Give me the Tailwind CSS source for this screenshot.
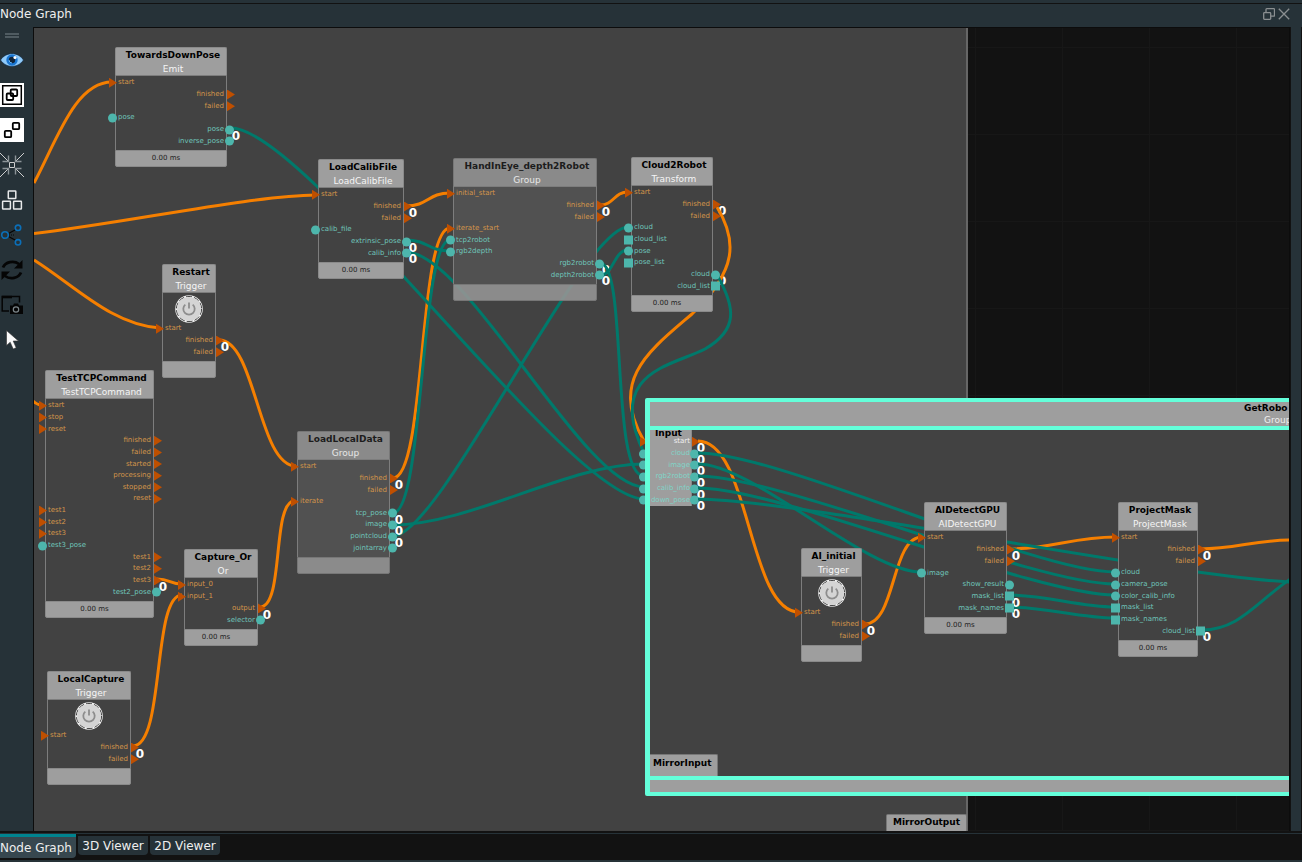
<!DOCTYPE html>
<html lang="en">
<head>
<meta charset="utf-8">
<title>Node Graph</title>
<script src="https://cdn.jsdelivr.net/npm/@tailwindcss/browser@4"></script>
</head>
<body class="flex h-screen flex-col overflow-hidden bg-[#263238] font-['DejaVu_Sans',sans-serif] text-[12px] text-[#eeeeee]">
<header class="mt-[3px] flex h-6 shrink-0 items-center justify-between border-t border-[#121212] pb-[3px] pr-3">
  <h1 class="leading-5">Node Graph</h1>
  <div class="flex gap-[3px]">
    <button aria-label="Float panel" class="h-3 w-3"><svg viewBox="0 0 12 12" class="h-3 w-3 fill-none stroke-[#8b8f91]"><rect x=".7" y="4.700" width="7" height="6.600" rx=".8" stroke-width="1.300"/><path stroke-width="1.300" d="M3 4.500V1.500q0-.8.8-.8h7q.7 0 .7.700v6q0 .8-.8.800H8"/></svg></button>
    <button aria-label="Close panel" class="h-3 w-3"><svg viewBox="0 0 12 12" class="h-3 w-3 fill-none stroke-[#8b8f91]"><path stroke-width="1.3" d="M.8.8l10.4 10.4M11.2.8L.8 11.2"/></svg></button>
  </div>
</header>
<div class="flex min-h-0 flex-1">
  <nav aria-label="Graph tools" class="flex w-[33px] shrink-0 flex-col gap-[11px]">
    <div class="ml-[5px] mt-[6px] -mb-px h-[5px] w-[14px] border-y-2 border-[#4f5b61]"></div>
    <button aria-label="Show" class="h-6 w-6"><svg viewBox="0 0 24 24" class="h-6 w-6"><path d="M.5 12C6 3.500 18 3.500 23.500 12 18 20.500 6 20.500.5 12z" fill="#90caf9" stroke="#0d2a45" stroke-width=".7"/><circle cx="12" cy="12" r="5.700" fill="#1976d2"/><circle cx="12" cy="12" r="3.200" fill="#10243a"/><path d="M9 12a3 3 0 0 0 3 3" stroke="#64b5f6" fill="none"/><circle cx="15" cy="9.500" r="1.600" fill="#fff"/></svg></button>
    <button aria-label="Group nodes" class="h-6 w-6 bg-white"><svg viewBox="0 0 24 24" class="h-6 w-6 fill-none stroke-black"><path stroke-width="1.500" d="M2.700 2.700h18.600v18.600H2.700z"/><rect x="6.700" y="10.500" width="6.500" height="6.500" rx="1" stroke-width="1.800"/><rect x="10.700" y="6.500" width="6.500" height="6.500" rx="1" stroke-width="1.800"/></svg></button>
    <button aria-label="Ungroup nodes" class="h-6 w-6 bg-white"><svg viewBox="0 0 24 24" class="h-6 w-6 fill-none stroke-black"><rect x="4.800" y="12.800" width="6.400" height="6.400" rx="1" stroke-width="1.800"/><rect x="12.800" y="4.800" width="6.400" height="6.400" rx="1" stroke-width="1.800"/></svg></button>
    <button aria-label="Fit to view" class="h-6 w-6"><svg viewBox="0 0 24 24" class="h-6 w-6 fill-none stroke-[#e0e0e0]"><path stroke-width=".9" d="M0 0l8 8M24 0l-8 8M0 24l8-8M24 24l-8-8M9.500 9.500h5v5h-5z"/><path stroke="#8c9498" stroke-width="1.400" d="M2.500 8.500h6v-6M21.500 8.500h-6v-6M2.500 15.500h6v6M21.500 15.500h-6v6"/></svg></button>
    <button aria-label="Layout" class="h-6 w-6"><svg viewBox="0 0 24 24" class="h-6 w-6 fill-none stroke-[#e8eaeb]" stroke-width="1.500"><rect x="8.300" y="3" width="7.500" height="7.500" rx=".5"/><rect x="2.600" y="13.300" width="7.800" height="7.800" rx=".5"/><rect x="13.600" y="13.300" width="7.800" height="7.800" rx=".5"/></svg></button>
    <button aria-label="Connections" class="h-6 w-6"><svg viewBox="0 0 24 24" class="h-6 w-6 fill-none"><path d="M8.500 10.500L15.500 6.800M8.500 13.500l7 3.700" stroke="#050505" stroke-width="1.300"/><path d="M9 12h5" stroke="#050505" stroke-dasharray="1 1"/><g stroke="#0b6fb8" stroke-width="1.600"><circle cx="5" cy="12" r="3.300"/><circle cx="18" cy="4.800" r="2.700"/><circle cx="18" cy="19.300" r="2.700"/></g></svg></button>
    <button aria-label="Refresh" class="h-6 w-6"><svg viewBox="0 0 24 24" class="h-6 w-6"><path d="M3 9.500a10 8.500 0 0 1 16-3.500M21 14.500a10 8.500 0 0 1-16 3.500" fill="none" stroke="#050505" stroke-width="2.800"/><path d="M22.500 2v8.500H14zM1.500 22v-8.500H10z" fill="#050505"/></svg></button>
    <button aria-label="Save screenshot" class="h-6 w-6"><svg viewBox="0 0 24 24" class="h-6 w-6"><path d="M9 18H2.200V3.500h17.300v6" fill="none" stroke="#050505" stroke-width="1.500"/><path d="M2 2.800h10v2.500H2z" fill="#050505"/><path d="M10 12.500h3l1-2h4l1 2h4V21H10z" fill="#050505"/><circle cx="16" cy="16.500" r="2.700" fill="none" stroke="#7b8589" stroke-width="1.200"/></svg></button>
    <button aria-label="Select" class="h-6 w-6"><svg viewBox="0 0 24 24" class="h-6 w-6"><path d="M6.500 2.500v15l3.700-3.300 3 6.800 3-1.300-3-6.700h5.300z" fill="#fafafa" stroke="#303030" stroke-width=".6"/></svg></button>
  </nav>
  <main id="canvas" class="relative flex-1 overflow-hidden border-x border-t border-[#0c0c0c] bg-[#121212] bg-[linear-gradient(to_right,#171717_1px,transparent_1px),linear-gradient(to_bottom,#171717_1px,transparent_1px)] bg-[size:87px_87px] bg-[position:71px_19px]">
    <div class="absolute inset-y-0 left-0 w-[934px] border-r-2 border-[#666666] bg-[#424242]"></div>
    <div id="under"></div>
    <svg class="absolute inset-0 h-full w-full"><g id="outer-wires" transform="translate(-34 -28)" fill="none" stroke-width="3"></g></svg>
    <div id="outer-nodes"></div>
    <div class="absolute bottom-0 left-[852px] flex h-[17px] w-[81px] items-center justify-center rounded-t-xs border border-b-0 border-[#777777] bg-[#9e9e9e] text-[9px] font-bold text-black">MirrorOutput</div>
    <div class="absolute left-[615px] right-0 top-[374px] h-[390px] bg-[#424242]"></div>
    <div id="input-node"></div>
    <section class="absolute left-[611px] right-0 top-[370px] flex h-[398px] flex-col rounded-l-xs border-l-5 border-[#64ffda]">
      <div class="flex h-8 shrink-0 justify-end overflow-hidden border-y-4 border-[#64ffda] bg-[#9e9e9e]">
        <div class="w-[45px] text-[9px] leading-[13px]"><div class="font-bold text-black">GetRobo</div><div class="-mt-px pl-5">Group</div></div>
      </div>
      <div class="flex flex-1 items-end"><div class="h-[22px] rounded-tr-xs border-r border-t border-[#777777] bg-[#9e9e9e] pl-[3px] pr-[6px] text-[9px] font-bold leading-[17px] text-black">MirrorInput</div></div>
      <div class="h-5 shrink-0 border-y-4 border-[#64ffda] bg-[#9e9e9e]"></div>
    </section>
    <svg class="absolute inset-0 h-full w-full"><g id="inner-wires" transform="translate(-34 -28)" fill="none" stroke-width="3"></g></svg>
    <div id="inner-nodes"></div>
  </main>
  <div class="w-3 shrink-0 border-x border-[#121212] bg-[#263238]"></div>
</div>
<footer class="h-[31px] shrink-0 border-b-2 border-[#263238] bg-[#121212] pt-[2px]">
  <div role="tablist" class="flex items-start gap-[2px] border-t border-[#263238]">
    <button role="tab" aria-selected="true" class="h-6 w-[76px] rounded-br-sm border-t-3 border-[#00838f] bg-[#37474f] text-left">Node Graph</button>
    <button role="tab" aria-selected="false" class="mt-[2px] h-[19px] w-[70px] rounded-b-sm bg-[#263238]">3D Viewer</button>
    <button role="tab" aria-selected="false" class="mt-[2px] h-[19px] w-[70px] rounded-b-sm bg-[#263238]">2D Viewer</button>
  </div>
</footer>
<script>
const OX = 34, OY = 28;
const ORANGE = '#f57f00', TEAL = '#00796b';
// Port rows: side (i/o), shape (t triangle, c circle, s square), label, badge (0 over wires, u under wires)
const nodes = [
  {x:115,y:47,w:112,t:'TowardsDownPose',s:'Emit',ms:1,p:['it start','ot finished','ot failed','ic pose','oc pose 0','oc inverse_pose']},
  {x:318,y:159,w:86,t:'LoadCalibFile',s:'LoadCalibFile',ms:1,p:['it start','ot finished 0','ot failed','ic calib_file','oc extrinsic_pose 0','oc calib_info 0']},
  {x:453,y:158,w:144,t:'HandInEye_depth2Robot',s:'Group',g:1,p:['it initial_start','ot finished 0','ot failed','it iterate_start','ic tcp2robot','ic rgb2depth','oc rgb2robot u','oc depth2robot 0']},
  {x:631,y:157,w:82,t:'Cloud2Robot',s:'Transform',ms:1,p:['it start','ot finished u','ot failed','ic cloud','is cloud_list','ic pose','is pose_list','oc cloud u','os cloud_list']},
  {x:162,y:264,w:54,t:'Restart',s:'Trigger',b:1,p:['it start','ot finished 0','ot failed']},
  {x:45,y:370,w:109,t:'TestTCPCommand',s:'TestTCPCommand',ms:1,p:['it start','it stop','it reset','ot finished','ot failed','ot started','ot processing','ot stopped','ot reset','it test1','it test2','it test3','ic test3_pose','ot test1','ot test2','ot test3 0','oc test2_pose']},
  {x:184,y:549,w:74,t:'Capture_Or',s:'Or',ms:1,p:['it input_0','it input_1','ot output 0','oc selector']},
  {x:47,y:671,w:84,t:'LocalCapture',s:'Trigger',b:1,p:['it start','ot finished 0','ot failed']},
  {x:297,y:431,w:93,t:'LoadLocalData',s:'Group',g:1,p:['it start','ot finished 0','ot failed','it iterate','oc tcp_pose 0','oc image 0','oc pointcloud 0','oc jointarray']},
  {x:801,y:548,w:61,t:'AI_initial',s:'Trigger',b:1,inner:1,p:['it start','ot finished 0','ot failed']},
  {x:924,y:502,w:83,t:'AIDetectGPU',s:'AIDetectGPU',ms:1,inner:1,p:['it start','ot finished 0','ot failed','ic image','oc show_result','os mask_list 0','os mask_names 0']},
  {x:1118,y:502,w:80,t:'ProjectMask',s:'ProjectMask',ms:1,inner:1,p:['it start','ot finished 0','ot failed','ic cloud','ic camera_pose','ic color_calib_info','is mask_list','is mask_names','os cloud_list 0']}
];
const marker = (side, shape) => {
  if (shape === 't') return side === 'i'
    ? '<i class="absolute -left-[7px] top-1/2 h-[10px] w-2 -translate-y-1/2 bg-[#bf4f00] [clip-path:polygon(0_0,100%_50%,0_100%)]"></i>'
    : '<i class="absolute -right-[9px] top-1/2 h-[10px] w-2 -translate-y-1/2 bg-[#bf4f00] [clip-path:polygon(0_0,100%_50%,0_100%)]"></i>';
  if (shape === 's') return side === 'i'
    ? '<i class="absolute -left-[8px] top-1/2 h-[9px] w-[9px] -translate-y-1/2 bg-[#4db6ac]"></i>'
    : '<i class="absolute -right-[8px] top-1/2 h-[9px] w-[9px] -translate-y-1/2 bg-[#4db6ac]"></i>';
  return side === 'i'
    ? '<i class="absolute -left-[8px] top-1/2 h-[9px] w-[9px] -translate-y-1/2 rounded-full bg-[#4db6ac]"></i>'
    : '<i class="absolute -right-[8px] top-1/2 h-[9px] w-[9px] -translate-y-1/2 rounded-full bg-[#4db6ac]"></i>';
};
const badge = '<b class="absolute -right-[14px] top-[6px] text-[12px] leading-3 text-white">0</b>';
const row = line => {
  const [kind, label, b] = line.split(' ');
  return `<li class="relative flex flex-1 items-center px-[2px] ${kind[0] === 'o' ? 'justify-end' : 'justify-start'} ${kind[1] === 't' ? 'text-[#d3954a]' : 'text-[#6fc5ba]'}">${b === '0' ? badge : ''}${marker(kind[0], kind[1])}<span>${label}</span></li>`;
};
const power = '<button aria-label="Trigger" class="mx-auto -mb-px mt-[2px] block h-7 w-7 shrink-0"><svg viewBox="0 0 28 28" class="h-7 w-7"><circle cx="14" cy="14" r="13.800" fill="#f2f2f2"/><circle cx="14" cy="14" r="12.600" fill="none" stroke="#2a2a2a" stroke-width=".9" stroke-dasharray="6 2"/><circle cx="14" cy="14" r="11.900" fill="#d4d4d4"/><path d="M10.300 9.600a5.700 5.700 0 1 0 7.400 0M14 7.500v6" fill="none" stroke="#8d8d8d" stroke-width="1.800"/></svg></button>';
for (const n of nodes) {
  const rowsH = Math.round(n.p.length * 35 / 3);
  const el = document.createElement('article');
  el.className = 'absolute flex flex-col' + (n.g ? ' text-white/80' : ' text-[#f5f5f5]');
  el.style.left = n.x - OX + 'px'; el.style.top = n.y - OY + 'px'; el.style.width = n.w + 'px';
  el.innerHTML = `
    <header class="h-7 shrink-0 whitespace-nowrap rounded-t-xs border border-b-0 pl-1 text-center text-[9px] leading-[14px] ${n.g ? 'border-[#777777] bg-[#8a8a8a]' : 'border-[#8a8a8a] bg-[#9e9e9e]'}"><h2 class="font-bold ${n.g ? 'text-[#1c1c1c]' : 'text-black'}">${n.t}</h2><p>${n.s}</p></header>
    <div class="flex flex-col border-x border-t border-[#7d7d7d] pb-[3px] ${n.g ? 'bg-[#515151]' : 'bg-[#424242]'}">${n.b ? power : ''}<div class="pt-px"><ul class="flex flex-col text-[7px] leading-[9px]" style="height:${rowsH}px">${n.p.map(row).join('')}</ul></div></div>
    <footer class="h-[17px] rounded-b-xs border text-center text-[7px] leading-[15px] text-[#222222] ${n.ms ? 'pr-[10px]' : ''} ${n.g ? 'border-[#777777] bg-[#949494]/90' : 'border-[#8a8a8a] bg-[#9e9e9e]'}">${n.ms ? '0.00 ms' : ''}</footer>`;
  document.getElementById(n.inner ? 'inner-nodes' : 'outer-nodes').append(el);
  n.p.forEach((line, i) => {
    if (!line.endsWith(' u')) return;
    const b = document.createElement('b');
    b.className = 'absolute text-[12px] leading-3 text-white';
    b.style.left = n.x + n.w + 5 - OX + 'px';
    b.style.top = n.y + 36 + Math.round(i * 35 / 3) - OY + 'px';
    b.textContent = '0';
    document.getElementById('under').append(b);
  });
}
document.getElementById('input-node').innerHTML = `<article class="absolute left-[613px] top-[401px] w-[45px] border-r border-[#8a8a8a] bg-[#9e9e9e]"><h2 class="-mb-[2px] pl-2 text-[9px] font-bold leading-[9px] text-black">Input</h2><ul class="flex h-[70px] flex-col text-[7px] leading-[9px]">${['t start','c cloud','c image','c rgb2robot','c calib_info','c down_pose'].map(l => { const [k, t] = l.split(' '); return `<li class="relative flex flex-1 items-center justify-end pr-px ${k === 't' ? 'text-[#f0f0f0]' : 'text-[#80d4c8]'}">${badge}${marker('i', k)}${marker('o', k)}<span>${t}</span></li>`; }).join('')}</ul></article>`;
const wires = {
  'outer-wires': [
    [ORANGE,'M34 183C57 140 75 82 112 82'],[ORANGE,'M34 233.500C130 222 250 196 316 195'],[ORANGE,'M34 260C75 286 112 325 160 328'],
    [ORANGE,'M33 401C36 404 38 405 42 405'],[ORANGE,'M219 340C256 340 258 466 296 466'],[ORANGE,'M157 579C170 579 170 584 182 584'],
    [ORANGE,'M133 746C165 746 152 595 182 595'],[ORANGE,'M261 607C284 604 272 503 294 501'],[ORANGE,'M393 478C426 478 418 228 450 228'],
    [ORANGE,'M406 206C428 206 428 193 450 193'],[ORANGE,'M600 205C614 205 614 192 628 192'],
    [ORANGE,'M717 207C737 240 738 270 692 314C650 350 608 380 644 441'],
    [TEAL,'M231 128C306 128 569 499 644 499'],[TEAL,'M406 240C428 240 428 251 450 251'],[TEAL,'M406 252C466 252 584 487 644 487'],
    [TEAL,'M393 513C424 513 420 240 450 240'],[TEAL,'M393 525C470 525 568 464 644 464'],[TEAL,'M393 536C440 536 582 227 628 227'],
    [TEAL,'M600 263C628 263 610 476 644 476'],[TEAL,'M600 276C614 274 614 250 628 250'],
    [TEAL,'M717 275C736 308 738 330 705 349C672 366 605 372 644 453']
  ],
  'inner-wires': [
    [ORANGE,'M698 441C750 441 748 612 799 612'],[ORANGE,'M865 624C896 624 891 537 922 537'],[ORANGE,'M1008 549C1052 549 1072 537 1116 537'],
    [ORANGE,'M1200 549C1236 549 1254 540 1292 540'],
    [TEAL,'M698 453C780 453 1033 572 1115 572'],[TEAL,'M698 464C753 464 866 572 921 572'],[TEAL,'M698 476C780 476 1033 584 1115 584'],
    [TEAL,'M698 488C780 488 1033 595 1115 595'],[TEAL,'M698 499C800 500 1180 578 1292 582'],
    [TEAL,'M1010 595C1045 595 1080 607 1115 607'],[TEAL,'M1010 607C1045 607 1080 618 1115 618'],[TEAL,'M1202 630C1240 630 1258 600 1292 578']
  ]
};
for (const id in wires) document.getElementById(id).innerHTML = wires[id].map(([c, d]) => `<path stroke="${c}" d="${d}"/>`).join('');
</script>
</body>
</html>
